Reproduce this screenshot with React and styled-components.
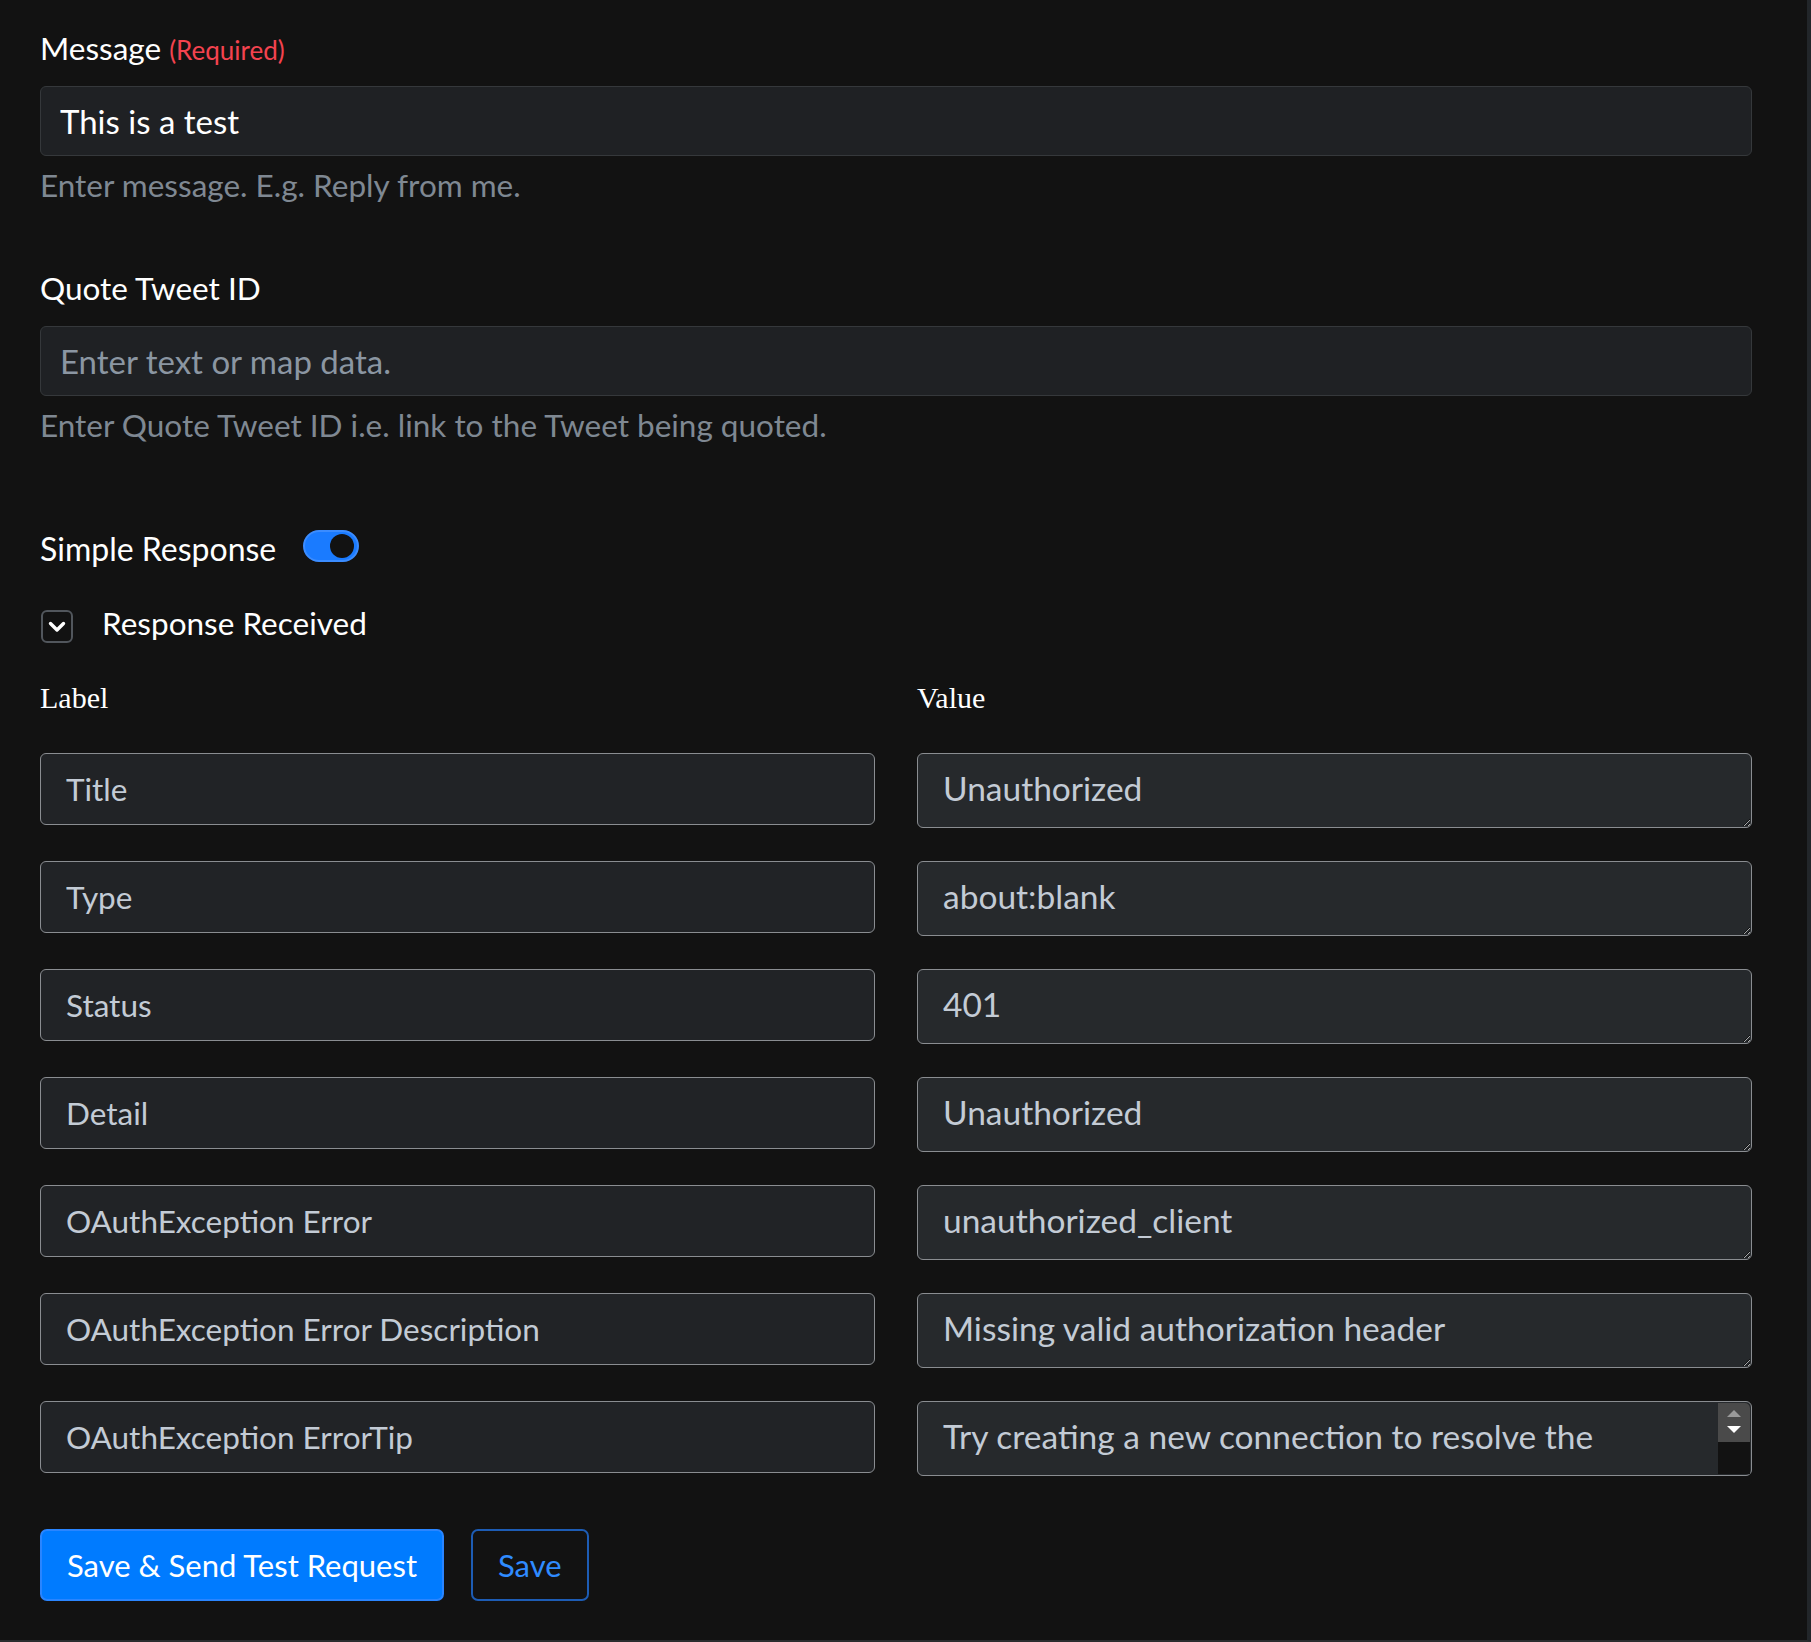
import styled, { createGlobalStyle } from 'styled-components';

const GlobalStyle = createGlobalStyle`
  body {
    margin: 0;
    background: #121212;
    font-family: Lato, "Noto Sans", sans-serif;
  }
`;

const rows = [
  { label: 'Title', value: 'Unauthorized' },
  { label: 'Type', value: 'about:blank' },
  { label: 'Status', value: '401' },
  { label: 'Detail', value: 'Unauthorized' },
  { label: 'OAuthException Error', value: 'unauthorized_client' },
  { label: 'OAuthException Error Description', value: 'Missing valid authorization header' },
  { label: 'OAuthException ErrorTip', value: 'Try creating a new connection to resolve the issue.', scroll: true },
];

export default function App() {
  return (
    <Page>
      <GlobalStyle />

      <FieldLabel>
        Message <Required>(Required)</Required>
      </FieldLabel>
      <TextInput defaultValue="This is a test" />
      <Help>Enter message. E.g. Reply from me.</Help>

      <FieldLabel $spaced>Quote Tweet ID</FieldLabel>
      <TextInput placeholder="Enter text or map data." />
      <Help>Enter Quote Tweet ID i.e. link to the Tweet being quoted.</Help>

      <SwitchRow>
        <SwitchText>Simple Response</SwitchText>
        <Switch>
          <Knob />
        </Switch>
      </SwitchRow>

      <Collapse>
        <CollapseBox>
          <svg width="20" height="14" viewBox="0 0 20 14">
            <path d="M3.5 3.5 L10 10 L16.5 3.5" fill="none" stroke="#fff" strokeWidth="3.4" strokeLinecap="round" strokeLinejoin="round" />
          </svg>
        </CollapseBox>
        <CollapseText>Response Received</CollapseText>
      </Collapse>

      <Grid>
        <ColHead>Label</ColHead>
        <ColHead>Value</ColHead>
        {rows.map((row, index) => (
          <Pair key={index}>
            <KeyInput defaultValue={row.label} />
            <ValueCell>
              <ValueArea defaultValue={row.value} $scroll={row.scroll} />
              {row.scroll && (
                <FakeScroll>
                  <ScrollButtons>
                    <svg width="20" height="30" viewBox="0 0 20 30">
                      <path d="M3 9 L10 2 L17 9 Z" fill="#9a9a9a" />
                      <path d="M3 18 L17 18 L10 25 Z" fill="#fff" />
                    </svg>
                  </ScrollButtons>
                </FakeScroll>
              )}
            </ValueCell>
          </Pair>
        ))}
      </Grid>

      <Actions>
        <Button $primary>Save &amp; Send Test Request</Button>
        <Button>Save</Button>
      </Actions>
    </Page>
  );
}

const Page = styled.div`
  box-sizing: border-box;
  width: 1811px;
  min-height: 1642px;
  padding: 31px 55px 0 40px;
  border-right: 4px solid #22262a;
  border-bottom: 2px solid #2a2c2e;
`;

const FieldLabel = styled.div`
  font-size: 31.5px;
  line-height: 34px;
  color: #fff;
  margin-top: ${(p) => (p.$spaced ? '69px' : '0')};
`;

const Required = styled.span`
  font-size: 26px;
  line-height: 1;
  color: #f4434f;
`;

const TextInput = styled.input`
  display: block;
  box-sizing: border-box;
  width: 100%;
  height: 70px;
  margin-top: 21px;
  padding: 0 19px;
  background: #1f2124;
  border: 1px solid #35383b;
  border-radius: 6px;
  color: #fff;
  font-family: inherit;
  font-size: 33px;
  outline: none;

  &::placeholder {
    color: #8b96a2;
  }
`;

const Help = styled.div`
  margin-top: 12px;
  font-size: 31.5px;
  line-height: 34px;
  color: #7f8892;
`;

const SwitchRow = styled.div`
  display: flex;
  align-items: flex-start;
  gap: 27px;
  margin-top: 88px;
`;

const SwitchText = styled.span`
  font-size: 32px;
  line-height: 38px;
  color: #fff;
`;

const Switch = styled.div`
  box-sizing: border-box;
  width: 56px;
  height: 32px;
  display: flex;
  align-items: center;
  justify-content: flex-end;
  padding-right: 3px;
  background: #1a7bff;
  border: 2px solid #3b8cff;
  border-radius: 16px;
`;

const Knob = styled.div`
  width: 24px;
  height: 24px;
  border-radius: 50%;
  background: #121212;
`;

const Collapse = styled.div`
  display: flex;
  align-items: flex-start;
  gap: 29px;
  margin-top: 37px;
`;

const CollapseBox = styled.div`
  box-sizing: border-box;
  width: 32px;
  height: 33px;
  margin: 5px 0 0 1px;
  display: flex;
  align-items: center;
  justify-content: center;
  border: 2px solid #51565c;
  border-radius: 6px;
`;

const CollapseText = styled.span`
  font-size: 31.5px;
  line-height: 36px;
  color: #fff;
`;

const Grid = styled.div`
  display: grid;
  grid-template-columns: 1fr 1fr;
  column-gap: 42px;
  row-gap: 33px;
  margin-top: 38px;
`;

const ColHead = styled.div`
  font-family: "Liberation Serif", "Times New Roman", serif;
  font-size: 30px;
  line-height: 34px;
  color: #fff;
  margin-bottom: 5px;
`;

const Pair = styled.div`
  display: contents;
`;

const KeyInput = styled.input`
  box-sizing: border-box;
  width: 100%;
  height: 72px;
  padding: 0 25px;
  background: #212326;
  border: 1.5px solid #8a8d91;
  border-radius: 6px;
  color: #c3cbd5;
  font-family: inherit;
  font-size: 31.5px;
  outline: none;
`;

const ValueCell = styled.div`
  position: relative;
  height: 75px;
`;

const ValueArea = styled.textarea`
  display: block;
  box-sizing: border-box;
  width: 100%;
  height: 75px;
  padding: 10px ${(p) => (p.$scroll ? '90px' : '25px')} 0 25px;
  background: #26292c;
  border: 1.5px solid #8a8d91;
  border-radius: 6px;
  color: #c3cbd5;
  font-family: inherit;
  font-size: 33.5px;
  line-height: 49.5px;
  color-scheme: dark;
  resize: vertical;
  overflow: hidden;
  outline: none;
`;

const FakeScroll = styled.div`
  position: absolute;
  top: 2px;
  right: 2px;
  bottom: 2px;
  width: 32px;
  background: #121212;
  border-top-right-radius: 5px;
`;

const ScrollButtons = styled.div`
  height: 39px;
  display: flex;
  align-items: center;
  justify-content: center;
  background: #4a4a4a;
  border-top-right-radius: 5px;
`;

const Actions = styled.div`
  display: flex;
  gap: 27px;
  margin-top: 53px;
`;

const Button = styled.button`
  box-sizing: border-box;
  height: 72px;
  padding: 0 25px;
  font-family: inherit;
  font-size: 31px;
  border-radius: 7px;
  cursor: pointer;
  color: ${(p) => (p.$primary ? '#fff' : '#2f8bff')};
  background: ${(p) => (p.$primary ? '#007bff' : 'transparent')};
  border: 2px solid ${(p) => (p.$primary ? '#2a85ff' : '#1d5cb4')};
`;
